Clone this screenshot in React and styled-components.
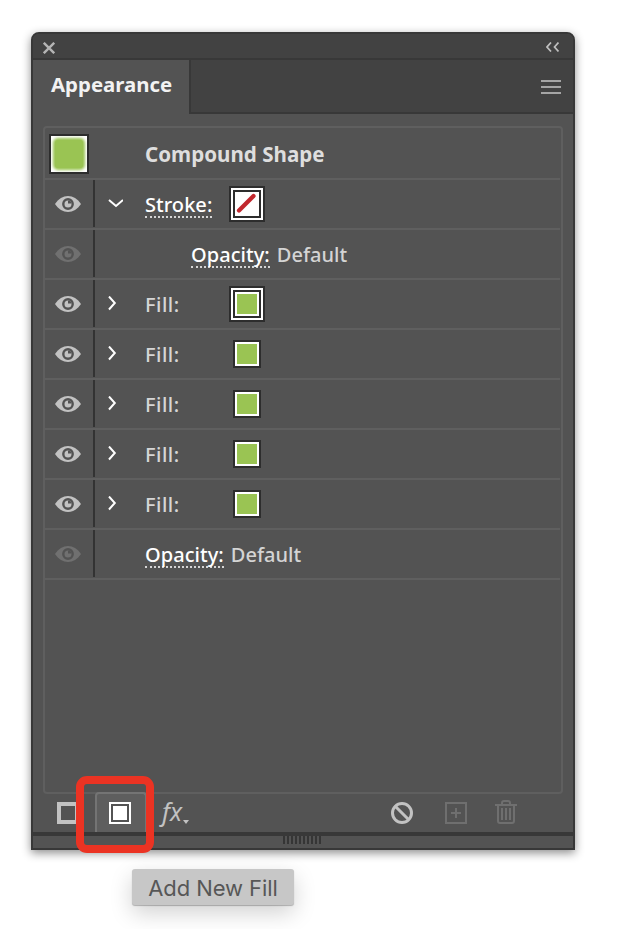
import styled, { createGlobalStyle } from "styled-components";

const rows = [
  { label: "Stroke:", link: true, arrow: "down", swatch: "none", active: true },
  { label: "Opacity:", link: true, value: "Default", indent: true, dim: true },
  { label: "Fill:", arrow: "right", swatch: "fill", active: true },
  { label: "Fill:", arrow: "right", swatch: "fill" },
  { label: "Fill:", arrow: "right", swatch: "fill" },
  { label: "Fill:", arrow: "right", swatch: "fill" },
  { label: "Fill:", arrow: "right", swatch: "fill" },
  { label: "Opacity:", link: true, value: "Default", dim: true },
];

const Eye = ({ dim }) => (
  <svg width="26" height="16" viewBox="0 0 26 16">
    <path
      d="M0 8C3.5 2.8 8 0 13 0s9.500 2.800 13 8c-3.500 5.200-8 8-13 8S3.500 13.200 0 8z"
      fill={dim ? "#707070" : "#c2c2c2"}
    />
    <circle cx="13" cy="8" r="4.7" fill="none" stroke="#535353" strokeWidth="2.4" />
    <path d="M13 7.500V4.500A3.500 3.500 0 0 1 16.500 7.500z" fill="#535353" />
  </svg>
);

const Arrow = ({ type }) => (
  <svg width="16" height="16" viewBox="0 0 16 16" fill="none" stroke="#fff" strokeWidth="2">
    <path d={type === "down" ? "M2 4l7 6 7-6" : "M2 .500l5.800 6.500L2 13.500"} />
  </svg>
);

const Swatch = ({ type, active }) => (
  <SwatchFrame $active={active}>
    <SwatchColor $type={type}>
      {type === "none" && (
        <svg width="24" height="24" viewBox="0 0 24 24">
          <path d="M4 18.500L18.500 4" stroke="#c1272d" strokeWidth="4.200" strokeLinecap="round" />
        </svg>
      )}
    </SwatchColor>
  </SwatchFrame>
);

const Row = ({ label, link, value, indent, arrow, swatch, active, dim }) => (
  <RowWrap>
    <EyeCell>
      <Eye dim={dim} />
    </EyeCell>
    <ArrowCell $indent={indent}>{arrow && <Arrow type={arrow} />}</ArrowCell>
    <LabelCell $fixed={!!swatch}>
      <Label $link={link}>{label}</Label>
    </LabelCell>
    {swatch && (
      <SwatchCell>
        <Swatch type={swatch} active={active} />
      </SwatchCell>
    )}
    {value && <Value>{value}</Value>}
  </RowWrap>
);

const App = () => {
  return (
    <Page>
      <GlobalStyle />
      <Panel>
        <TitleBar>
          <svg width="12" height="12" viewBox="0 0 12 12" stroke="#b4b4b4" strokeWidth="2.400">
            <path d="M.8.8l10.400 10.400M11.200.8L.8 11.200" />
          </svg>
          <svg width="13" height="10" viewBox="0 0 13 10" fill="none" stroke="#c0c0c0" strokeWidth="1.700">
            <path d="M5 .5L1 5l4 4.500M12.500.5l-4 4.500 4 4.500" />
          </svg>
        </TitleBar>
        <TabBar>
          <Tab>Appearance</Tab>
          <TabSpace>
            <svg width="20" height="14" viewBox="0 0 20 14" fill="#a5a5a5">
              <path d="M0 0h20v2H0zM0 6h20v2H0zM0 12h20v2H0z" />
            </svg>
          </TabSpace>
        </TabBar>
        <Body>
          <List>
            <Heading>
              <Thumb>
                <ThumbColor />
              </Thumb>
              <HeadingText>Compound Shape</HeadingText>
            </Heading>
            {rows.map((row, i) => (
              <Row key={i} {...row} />
            ))}
          </List>
          <Toolbar>
            <Tools>
              <StrokeIcon />
              <FillButton>
                <FillIcon />
                <Highlight />
              </FillButton>
              <Effects>
                fx
                <svg width="6" height="4" viewBox="0 0 6 4">
                  <path d="M0 0h6L3 4z" fill="#c2c2c2" />
                </svg>
              </Effects>
            </Tools>
            <Actions>
              <svg width="22" height="22" viewBox="0 0 22 22" fill="none" stroke="#c2c2c2" strokeWidth="3">
                <circle cx="11" cy="11" r="9.500" />
                <path d="M4.500 4.500l13 13" />
              </svg>
              <svg width="22" height="22" viewBox="0 0 22 22" fill="none" stroke="#6f6f6f" strokeWidth="2">
                <rect x="1" y="1" width="20" height="20" />
                <path d="M11 6v10M6 11h10" />
              </svg>
              <svg width="22" height="24" viewBox="0 0 22 24" fill="none" stroke="#6f6f6f" strokeWidth="2">
                <path d="M0 5h22M7 4V3q0-2 2-2h4q2 0 2 2v1M3 5v16q0 2 2 2h12q2 0 2-2V5" />
                <path d="M7 8v12M11 8v12M15 8v12" />
              </svg>
            </Actions>
          </Toolbar>
        </Body>
        <Grip>
          <svg width="38" height="8" viewBox="0 0 38 8">
            <path d="M1 0v8M5 0v8M9 0v8M13 0v8M17 0v8M21 0v8M25 0v8M29 0v8M33 0v8M37 0v8" stroke="#353535" strokeWidth="2" />
          </svg>
        </Grip>
      </Panel>
      <Tooltip>Add New Fill</Tooltip>
    </Page>
  );
};

const GlobalStyle = createGlobalStyle`
  * {
    box-sizing: border-box;
  }
  body {
    margin: 0;
    background: #fff;
    overflow: hidden;
  }
  svg {
    display: block;
    flex: none;
  }
`;

const Page = styled.div`
  width: 622px;
  height: 929px;
  padding: 32px 0 0 31px;
  overflow: hidden;
  font-family: "Noto Sans", "Open Sans", sans-serif;
  font-size: 20px;
  white-space: nowrap;
`;

const Panel = styled.div`
  width: 544px;
  height: 818px;
  border: 2px solid #383838;
  border-radius: 8px 8px 0 0;
  background: #535353;
  box-shadow: 0 3px 10px rgba(0, 0, 0, 0.45);
  display: flex;
  flex-direction: column;
`;

const TitleBar = styled.div`
  height: 26px;
  flex: none;
  display: flex;
  justify-content: space-between;
  align-items: flex-start;
  padding: 8px 14px 0 10px;
  background: #424242;
  border-bottom: 2px solid #383838;
  border-radius: 6px 6px 0 0;
`;

const TabBar = styled.div`
  height: 54px;
  flex: none;
  display: flex;
`;

const Tab = styled.div`
  width: 156px;
  padding-left: 18px;
  line-height: 49px;
  font-size: 20.4px;
  font-weight: 700;
  color: #f2f2f2;
`;

const TabSpace = styled.div`
  flex: 1;
  display: flex;
  justify-content: flex-end;
  padding: 20px 12px 0 0;
  background: #424242;
  border-left: 2px solid #383838;
  border-bottom: 2px solid #383838;
`;

const Body = styled.div`
  flex: 1;
  padding: 12px 10px 0;
`;

const List = styled.div`
  height: 668px;
  padding-right: 1px;
  border: 2px solid #5f5f5f;
  border-radius: 4px;
`;

const Heading = styled.div`
  height: 52px;
  display: flex;
  align-items: center;
  padding-left: 4px;
  border-bottom: 2px solid #5f5f5f;
`;

const Thumb = styled.div`
  width: 40px;
  height: 40px;
  margin-top: 2px;
  border: 2px solid #2d2d2d;
  background: #fff;
  padding: 4px;
  overflow: hidden;
`;

const ThumbColor = styled.div`
  height: 28px;
  border-radius: 3px;
  background: #9ac453;
  box-shadow: 0 0 3px 2px #9ac453;
`;

const HeadingText = styled.div`
  margin-left: 56px;
  padding-top: 1px;
  font-size: 20.6px;
  font-weight: 700;
  color: #dedede;
`;

const RowWrap = styled.div`
  height: 50px;
  display: flex;
  border-bottom: 2px solid #5f5f5f;
`;

const EyeCell = styled.div`
  width: 50px;
  height: 47px;
  padding: 16px 0 0 10px;
  border-right: 2px solid #333;
`;

const ArrowCell = styled.div`
  width: ${(props) => (props.$indent ? "96px" : "50px")};
  padding: 16px 0 0 12px;
`;

const LabelCell = styled.div`
  width: ${(props) => (props.$fixed ? "82px" : "auto")};
  padding-top: 13px;
`;

const Label = styled.span`
  display: block;
  width: max-content;
  height: 25px;
  line-height: 24px;
  font-weight: 500;
  letter-spacing: ${(props) => (props.$link ? "0.05px" : "0.5px")};
  color: ${(props) => (props.$link ? "#fff" : "#d6d6d6")};
  border-bottom: ${(props) => (props.$link ? "2px dotted #d5d5d5" : "none")};
`;

const SwatchCell = styled.div`
  width: 40px;
  height: 48px;
  display: flex;
  align-items: center;
  justify-content: center;
`;

const SwatchFrame = styled.div`
  padding: ${(props) => (props.$active ? "2px" : 0)};
  background: #fff;
  border: ${(props) => (props.$active ? "2px solid #2d2d2d" : "none")};
`;

const SwatchColor = styled.div`
  width: 28px;
  height: 28px;
  border: 2px solid #2d2d2d;
  background: ${(props) => (props.$type === "fill" ? "#9ac453" : "#fff")};
  box-shadow: ${(props) => (props.$type === "fill" ? "inset 0 0 0 2px #fff" : "none")};
`;

const Value = styled.div`
  margin-left: 7px;
  padding-top: 13px;
  line-height: 24px;
  font-weight: 500;
  color: #d4d4d4;
`;

const Toolbar = styled.div`
  height: 38px;
  display: flex;
  justify-content: space-between;
`;

const Tools = styled.div`
  display: flex;
  padding-left: 14px;
`;

const StrokeIcon = styled.div`
  width: 22px;
  height: 22px;
  margin-top: 8px;
  border: 4px solid #c2c2c2;
`;

const FillButton = styled.div`
  position: relative;
  width: 52px;
  height: 40px;
  margin: -2px 0 0 16px;
  padding: 8px 0 0 12px;
  background: #5e5e5e;
  border: 2px solid #747474;
  border-bottom: none;
  border-radius: 4px 4px 0 0;
`;

const FillIcon = styled.div`
  width: 22px;
  height: 22px;
  border: 2px solid #fff;
  background: #fff;
  box-shadow: inset 0 0 0 2px #535353;
`;

/* callout ring drawn over the button */
const Highlight = styled.div`
  position: absolute;
  left: -21px;
  top: -18px;
  width: 78px;
  height: 77px;
  border: 8px solid #eb3323;
  border-radius: 11px;
`;

const Effects = styled.div`
  display: flex;
  margin-left: 15px;
  padding-top: 2px;
  font-size: 25px;
  line-height: 30px;
  font-style: italic;
  color: #c2c2c2;
  svg {
    margin: 24px 0 0 1px;
  }
`;

const Actions = styled.div`
  display: flex;
  gap: 32px;
  padding: 8px 46px 0 0;
  svg:nth-child(3) {
    margin: -2px 0 0 -4px;
  }
`;

const Grip = styled.div`
  height: 16px;
  flex: none;
  border-top: 4px solid #383838;
  padding-left: 250px;
`;

const Tooltip = styled.div`
  width: 162px;
  height: 36px;
  margin: 19px 0 0 101px;
  background: #c7c7c7;
  border-radius: 3px;
  box-shadow: 0 8px 22px rgba(0, 0, 0, 0.18), 0 1px 1px rgba(0, 0, 0, 0.25);
  font-family: Inter, sans-serif;
  font-size: 22px;
  letter-spacing: -0.08px;
  line-height: 38px;
  text-align: center;
  color: #575757;
`;

export default App;
